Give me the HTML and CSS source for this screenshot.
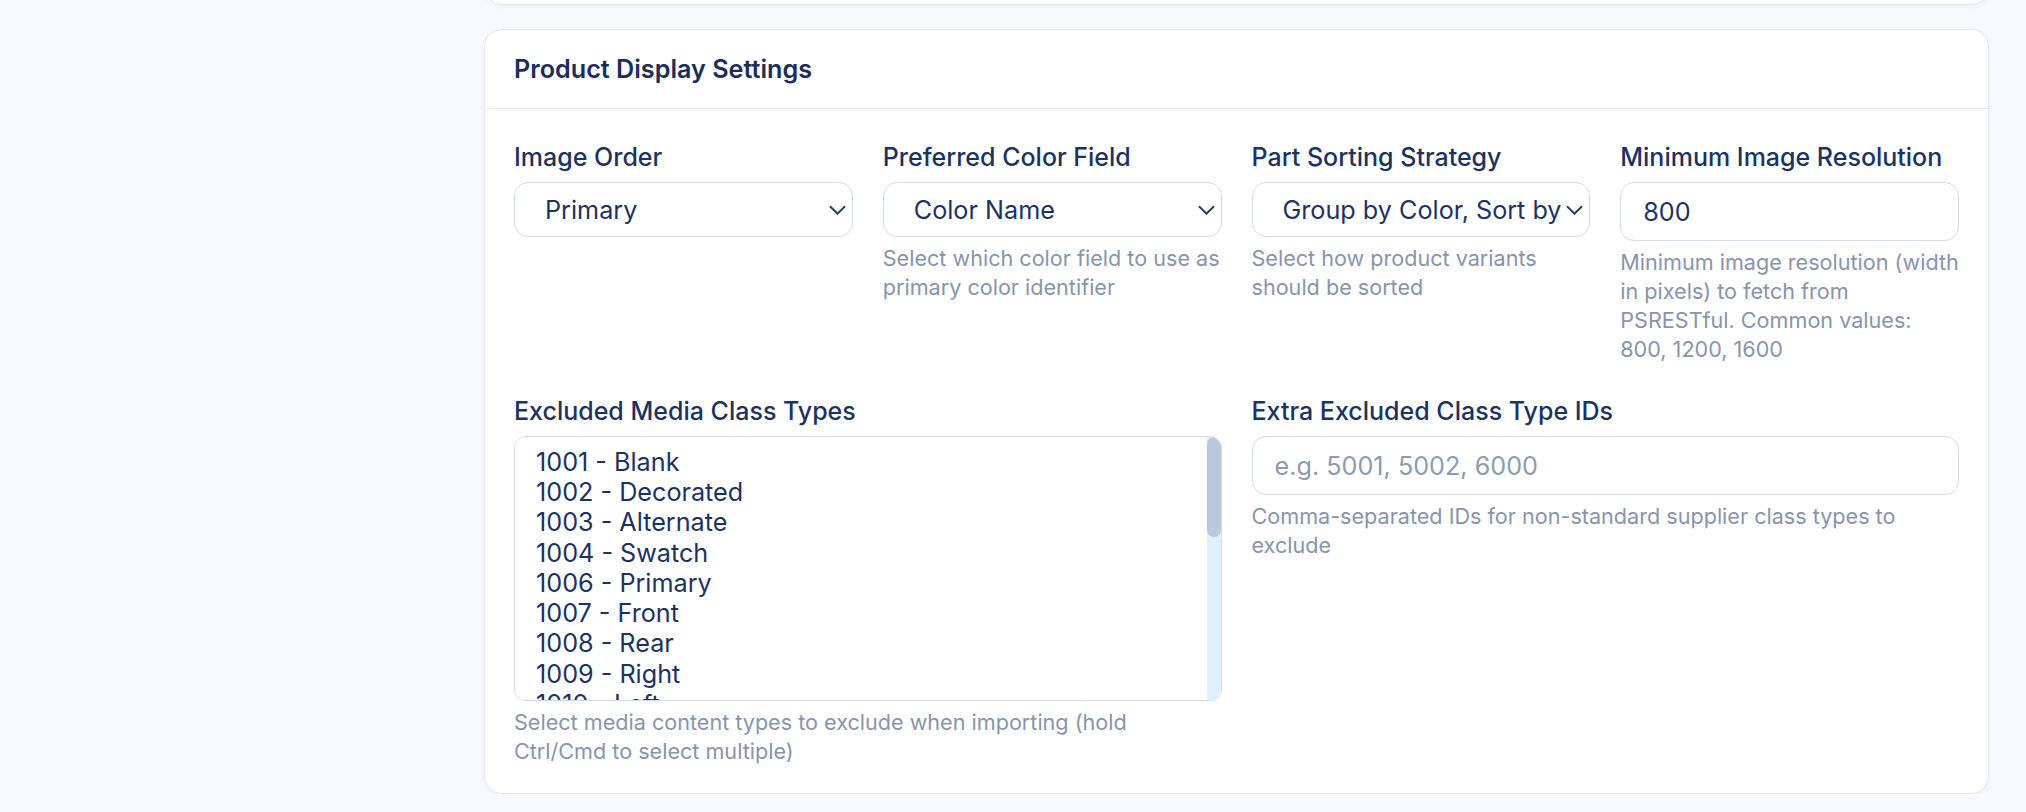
FILE: index.html
```html
<!DOCTYPE html>
<html lang="en">
<head>
    <meta charset="UTF-8">
    <meta name="viewport" content="width=device-width, initial-scale=1.0">
    <title>Product Display Settings</title>
    <link rel="stylesheet" href="styles.css">
</head>
<body>

<div class="page">
    <div class="card card-prev"></div>

    <section class="card">
        <div class="card-header">
            <h2>Product Display Settings</h2>
        </div>

        <div class="card-body">
            <div class="grid grid-4">
                <div class="field">
                    <label for="imageOrder">Image Order</label>
                    <div class="select-wrap">
                        <select id="imageOrder">
                            <option>Primary</option>
                            <option>Front</option>
                            <option>Alternate</option>
                        </select>
                        <svg class="chevron" viewBox="0 0 18 10"><path d="M1 1l8 8 8-8"/></svg>
                    </div>
                </div>

                <div class="field">
                    <label for="colorField">Preferred Color Field</label>
                    <div class="select-wrap">
                        <select id="colorField">
                            <option>Color Name</option>
                            <option>Color Code</option>
                        </select>
                        <svg class="chevron" viewBox="0 0 18 10"><path d="M1 1l8 8 8-8"/></svg>
                    </div>
                    <p class="help">Select which color field to use as primary color identifier</p>
                </div>

                <div class="field">
                    <label for="partSorting">Part Sorting Strategy</label>
                    <div class="select-wrap">
                        <select id="partSorting">
                            <option>Group by Color, Sort by Size</option>
                            <option>Sort by Size</option>
                        </select>
                        <svg class="chevron" viewBox="0 0 18 10"><path d="M1 1l8 8 8-8"/></svg>
                    </div>
                    <p class="help">Select how product variants should be sorted</p>
                </div>

                <div class="field">
                    <label for="minResolution">Minimum Image Resolution</label>
                    <input type="number" id="minResolution" value="800">
                    <p class="help">Minimum image resolution (width in pixels) to fetch from PSRESTful. Common values: 800, 1200, 1600</p>
                </div>
            </div>

            <div class="grid grid-2">
                <div class="field">
                    <label for="excludedTypes">Excluded Media Class Types</label>
                    <div class="listbox">
                        <select id="excludedTypes" multiple>
                            <option>1001 - Blank</option>
                            <option>1002 - Decorated</option>
                            <option>1003 - Alternate</option>
                            <option>1004 - Swatch</option>
                            <option>1006 - Primary</option>
                            <option>1007 - Front</option>
                            <option>1008 - Rear</option>
                            <option>1009 - Right</option>
                            <option>1010 - Left</option>
                            <option>1011 - Top</option>
                            <option>1012 - Bottom</option>
                            <option>1013 - Inside</option>
                            <option>1014 - Outside</option>
                            <option>2001 - High</option>
                            <option>2002 - Standard</option>
                            <option>2003 - Low</option>
                            <option>2004 - Logo</option>
                            <option>3001 - Video</option>
                            <option>3002 - Spec Sheet</option>
                            <option>3003 - Template</option>
                            <option>3004 - Other</option>
                        </select>
                        <div class="scrollbar"><div class="thumb"></div></div>
                    </div>
                    <p class="help">Select media content types to exclude when importing (hold Ctrl/Cmd to select multiple)</p>
                </div>

                <div class="field">
                    <label for="extraExcluded">Extra Excluded Class Type IDs</label>
                    <input type="text" id="extraExcluded" placeholder="e.g. 5001, 5002, 6000">
                    <p class="help">Comma-separated IDs for non-standard supplier class types to exclude</p>
                </div>
            </div>
        </div>
    </section>
</div>

</body>
</html>
```

FILE: styles.css
```css
body {
    margin: 0;
    padding: 0;
    background-color: #f7f9fc;
    color: #1c3263;
    font-family: Inter, "Noto Sans", Arial, sans-serif;
}
.page {
    margin-left: 484px;
    margin-right: 37px;
}
.card {
    background-color: #fff;
    border: 1px solid #e4e8f0;
    border-radius: 18px;
    box-shadow: 0 1px 5px rgba(30, 52, 101, 0.06);
}
.card-prev {
    height: 40px;
    margin-top: -37px;
    margin-bottom: 24px;
}
.card-header {
    height: 78px;
    display: flex;
    align-items: center;
    padding: 0 29px;
    border-bottom: 1px solid #e5e9f0;
}
.card-header h2 {
    margin: 0;
    font-size: 25.2px;
    font-weight: 600;
    color: #1b2d5c;
}
.card-body {
    display: flex;
    flex-direction: column;
    gap: 31px;
    padding: 32px 29px 27px;
}
.grid {
    display: grid;
    gap: 30px;
}
.grid-4 {
    grid-template-columns: repeat(4, 1fr);
}
.grid-2 {
    grid-template-columns: repeat(2, 1fr);
}
.field label {
    display: block;
    font-size: 25px;
    font-weight: 500;
    line-height: 33px;
    margin-bottom: 8px;
}
.select-wrap {
    position: relative;
}
select,
input {
    width: 100%;
    box-sizing: border-box;
    font-family: inherit;
    font-size: 25.2px;
    color: #1c3263;
    background-color: #fff;
    border: 1px solid #d5dbe7;
    border-radius: 14px;
    outline: none;
}
.select-wrap select {
    appearance: none;
    height: 55px;
    padding: 0 25px 0 30px;
}
.chevron {
    position: absolute;
    right: 7px;
    top: 23px;
    width: 17px;
    height: 10px;
    fill: none;
    stroke: #25396b;
    stroke-width: 2;
    pointer-events: none;
}
input {
    height: 59px;
    padding: 0 22px;
}
input::placeholder {
    color: #8d9ab2;
}
input::-webkit-inner-spin-button,
input::-webkit-outer-spin-button {
    appearance: none;
    margin: 0;
}
.listbox {
    display: flex;
    height: 265px;
    box-sizing: border-box;
    border: 1px solid #d5dbe7;
    border-radius: 12px;
    overflow: hidden;
}
.listbox select {
    flex: 1;
    height: 100%;
    padding: 10px 0;
    border: none;
    border-radius: 0;
    overflow: hidden;
}
.listbox option {
    padding: 0 21px;
    line-height: 30px;
    font-size: 25.2px;
    color: #1c3263;
}
.scrollbar {
    width: 14px;
    background-color: #e1effd;
}
.thumb {
    height: 100px;
    background-color: #b9c8dc;
    border-radius: 7px;
}
.help {
    margin: 7px 0 0;
    font-size: 21.6px;
    line-height: 29px;
    color: #8894ad;
}
```
